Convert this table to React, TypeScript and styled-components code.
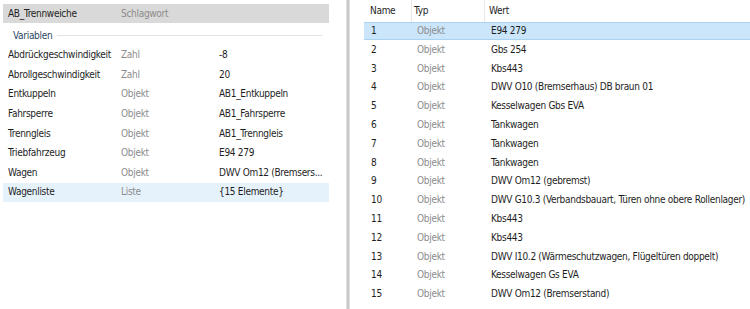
import React from "react";
import styled, { createGlobalStyle } from "styled-components";

const Global = createGlobalStyle`
  html, body { margin: 0; padding: 0; background: #ffffff; }
  body {
    font-family: Tahoma, "DejaVu Sans Condensed", "Liberation Sans", sans-serif;
    font-size: 10px;
    letter-spacing: -0.3px;
    color: #1e1e1e;
  }
`;

const Page = styled.div`
  display: flex;
  width: 750px;
  height: 309px;
  overflow: hidden;
  background: #fff;
`;

const LeftPanel = styled.div`
  width: 346px;
  flex: none;
  padding: 4px 0 0 3px;
  box-sizing: border-box;
`;

const Splitter = styled.div`
  width: 4px;
  flex: none;
  background: #c9c9c9;
  border-left: 1px solid #e2e2e2;
  border-right: 1px solid #e2e2e2;
  box-sizing: border-box;
`;

const RightPanel = styled.div`
  flex: 1;
  display: flex;
  flex-direction: column;
  padding-left: 14px;
`;

const PropRow = styled.div<{ $bg?: string; $h?: number }>`
  display: grid;
  grid-template-columns: 113px 98px 1fr;
  align-items: center;
  width: 326px;
  height: ${(p) => p.$h ?? 19.6}px;
  padding-left: 5px;
  box-sizing: border-box;
  background: ${(p) => p.$bg ?? "transparent"};
  white-space: nowrap;
  line-height: 14px;
`;

const Cell = styled.span<{ $muted?: boolean }>`
  color: ${(p) => (p.$muted ? "#8c8c8c" : "#1e1e1e")};
`;

const GroupHeader = styled.div`
  display: flex;
  align-items: center;
  gap: 5px;
  height: 22.4px;
  width: 319px;
  padding: 2px 0 0 10px;
  box-sizing: border-box;
  color: #2b4768;
  &::after {
    content: "";
    flex: 1;
    height: 1px;
    background: #e0e3e8;
  }
`;

const ListHeader = styled.div`
  display: grid;
  grid-template-columns: 48px 73px 1fr;
  height: 21.6px;
  align-items: stretch;
`;

const HeadCell = styled.div<{ $pad: number; $line?: boolean }>`
  display: flex;
  align-items: center;
  padding-left: ${(p) => p.$pad}px;
  color: #1e1e1e;
  border-right: ${(p) => (p.$line ? "1px solid #e8e8e8" : "none")};
`;

const ListRow = styled.div<{ $selected?: boolean }>`
  display: grid;
  grid-template-columns: 48px 73px 1fr;
  align-items: center;
  height: 18.8px;
  box-sizing: border-box;
  background: ${(p) => (p.$selected ? "#cbe6fb" : "transparent")};
  border-top: 1px solid ${(p) => (p.$selected ? "#a9d3f3" : "transparent")};
  border-bottom: 1px solid ${(p) => (p.$selected ? "#a9d3f3" : "transparent")};
  white-space: nowrap;
  line-height: 14px;
`;

const ListCell = styled.span<{ $pad: number; $muted?: boolean }>`
  padding-left: ${(p) => p.$pad}px;
  color: ${(p) => (p.$muted ? "#8c8c8c" : "#1e1e1e")};
`;

const vars: [string, string, string][] = [
  ["Abdrückgeschwindigkeit", "Zahl", "-8"],
  ["Abrollgeschwindigkeit", "Zahl", "20"],
  ["Entkuppeln", "Objekt", "AB1_Entkuppeln"],
  ["Fahrsperre", "Objekt", "AB1_Fahrsperre"],
  ["Trenngleis", "Objekt", "AB1_Trenngleis"],
  ["Triebfahrzeug", "Objekt", "E94 279"],
  ["Wagen", "Objekt", "DWV Om12 (Bremsers..."],
  ["Wagenliste", "Liste", "{15 Elemente}"],
];

const items = [
  "E94 279",
  "Gbs 254",
  "Kbs443",
  "DWV O10 (Bremserhaus) DB braun 01",
  "Kesselwagen Gbs EVA",
  "Tankwagen",
  "Tankwagen",
  "Tankwagen",
  "DWV Om12 (gebremst)",
  "DWV G10.3 (Verbandsbauart, Türen ohne obere Rollenlager)",
  "Kbs443",
  "Kbs443",
  "DWV I10.2 (Wärmeschutzwagen, Flügeltüren doppelt)",
  "Kesselwagen Gs EVA",
  "DWV Om12 (Bremserstand)",
];

export default function App() {
  return (
    <>
      <Global />
      <Page>
        <LeftPanel>
          <PropRow $bg="#d9d9d9" $h={19}>
            <Cell>AB_Trennweiche</Cell>
            <Cell $muted>Schlagwort</Cell>
            <Cell />
          </PropRow>
          <GroupHeader>Variablen</GroupHeader>
          {vars.map(([n, t, v]) => (
            <PropRow key={n} $bg={n === "Wagenliste" ? "#e6f2fb" : undefined}>
              <Cell>{n}</Cell>
              <Cell $muted>{t}</Cell>
              <Cell>{v}</Cell>
            </PropRow>
          ))}
        </LeftPanel>
        <Splitter />
        <RightPanel>
          <ListHeader>
            <HeadCell $pad={6} $line>Name</HeadCell>
            <HeadCell $pad={2} $line>Typ</HeadCell>
            <HeadCell $pad={4}>Wert</HeadCell>
          </ListHeader>
          {items.map((v, i) => (
            <ListRow key={i} $selected={i === 0}>
              <ListCell $pad={7}>{i + 1}</ListCell>
              <ListCell $pad={5} $muted>Objekt</ListCell>
              <ListCell $pad={6}>{v}</ListCell>
            </ListRow>
          ))}
        </RightPanel>
      </Page>
    </>
  );
}
